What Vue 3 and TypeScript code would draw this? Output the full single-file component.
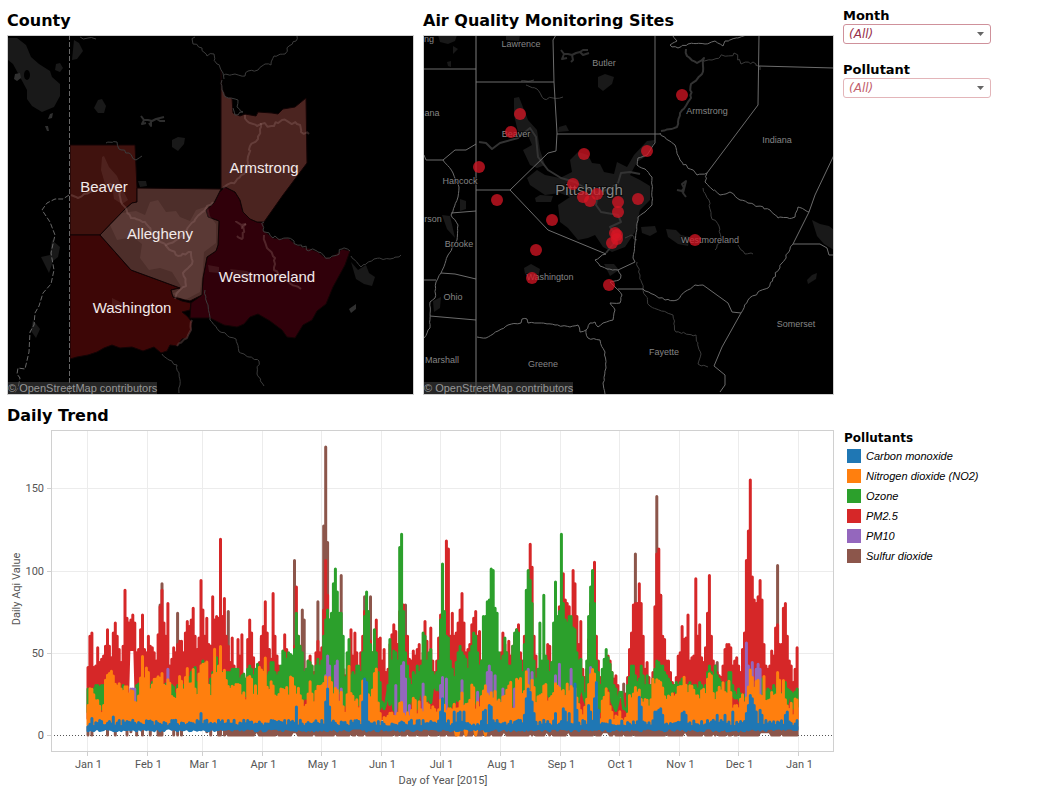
<script setup lang="ts">
import { ref } from 'vue'

type Point = [number, number]
interface Label { name: string; x: number; y: number; size?: number }

const month = ref('(All)')
const pollutant = ref('(All)')
const monthNames = ['Jan', 'Feb', 'Mar', 'Apr', 'May', 'Jun', 'Jul', 'Aug', 'Sep', 'Oct', 'Nov', 'Dec']

const legend = [
  { name: 'Carbon monoxide', color: '#1f77b4' },
  { name: 'Nitrogen dioxide (NO2)', color: '#ff7f0e' },
  { name: 'Ozone', color: '#2ca02c' },
  { name: 'PM2.5', color: '#d62728' },
  { name: 'PM10', color: '#9467bd' },
  { name: 'Sulfur dioxide', color: '#8c564b' },
]

function random(seed: number): () => number {
  let s = seed
  return () => {
    s = (s * 16807) % 2147483647
    return s / 2147483647
  }
}

/* Adds small bends between the given points, as a river has. */
function meander(flat: string, amount: number): string {
  const points = flat.trim().split(' ').map((p) => p.split(',').map(Number) as Point)
  const rnd = random(97 + points.length * 31 + Math.round(points[0][0]))
  let d = `M${points[0][0]} ${points[0][1]}`
  for (let i = 1; i < points.length; i++) {
    const [ax, ay] = points[i - 1]
    const [bx, by] = points[i]
    const steps = Math.max(1, Math.round(Math.hypot(bx - ax, by - ay) / 3))
    for (let k = 1; k <= steps; k++) {
      const t = k / steps
      const j = k === steps ? 0 : amount
      const x = ax + (bx - ax) * t + (rnd() - 0.5) * j * 2
      const y = ay + (by - ay) * t + (rnd() - 0.5) * j * 2
      d += `L${x.toFixed(1)} ${y.toFixed(1)}`
    }
  }
  return d
}

/* County map */
const counties = [
  { name: 'Beaver', fill: '#40120e', d: 'M70 145 135 145 137 188 137 202 132 203 125 209 100 235 70 235Z' },
  { name: 'Washington', fill: '#3d0606', d: 'M70 235 100 235 131 270 180 288 171 290 173 297 182 301 191 303 190 310 182 312 187 316 192 322 191 330 187 338 182 339 177 346 170 345 167 351 161 353 154 347 143 351 132 347 120 348 112 345 104 348 97 352 88 355 77 357 70 359Z' },
  { name: 'Westmoreland', fill: '#30000a', d: 'M225 187 235 192 240 200 243 212 250 219 257 222 264 223 263 230 268 234 273 238 281 239 288 238 295 244 302 247 310 249 318 252 324 257 330 258 338 253 342 249 350 251 345 265 333 287 326 304 317 311 312 320 303 325 295 338 287 337 282 330 270 321 258 314 250 317 244 324 237 327 224 325 210 318 190 318 191 303 202 295 203 278 207 257 216 251 218 245 219 221 208 217 206 210 214 203 219 193Z' },
  { name: 'Armstrong', fill: '#4b2420', d: 'M221 70 222 88 226 97 232 98 233 113 240 116 245 114 256 116 258 112 272 113 278 114 283 109 295 107 306 98 307 163 283 195 264 222 257 222 250 219 243 212 240 200 235 192 225 187 221 189Z' },
  { name: 'Allegheny', fill: '#4d2e2a', d: 'M137 188 221 189 219 193 214 203 206 210 208 217 219 221 218 245 216 251 207 257 203 278 202 295 190 301 173 297 171 290 180 288 131 270 100 235 125 209 132 203 137 202Z' },
]
const countyLabels: Label[] = [
  { name: 'Beaver', x: 104, y: 192 },
  { name: 'Allegheny', x: 160, y: 239 },
  { name: 'Armstrong', x: 264, y: 173 },
  { name: 'Westmoreland', x: 267, y: 282 },
  { name: 'Washington', x: 132, y: 313 },
]
const countyPatches = [
  'M8 38 17 38 26 45 31 57 39 64 50 71 52 77 60 84 60 96 54 107 42 112 32 106 27 99 27 90 20 77 13 64 8 60Z',
  'M74 40 79 43 83 51 77 59 72 60Z',
  'M56 64 60 63 63 68 60 72 55 70Z',
  'M98 100 102 99 106 106 104 113 98 113 94 108Z',
  'M172 140 178 137 185 138 184 144 178 151 172 147Z',
  'M138 181 146 181 147 186 140 187Z',
  'M41 257 50 255 52 240 60 247 58 257 53 261 49 273Z',
  'M33 320 40 329 36 338 31 331Z',
  'M351 262 358 270 366 265 369 273 375 277 372 286 364 284 356 279Z',
]
const urbanPatches = [
  'M102 157 104 156 109 167 117 176 122 188 128 200 122 204 114 199 112 185 105 184 101 170Z',
  'M110 225 122 213 136 211 145 215 150 202 158 200 166 212 176 211 180 217 190 221 196 210 208 206 210 216 216 224 216 243 204 252 203 270 200 292 185 300 172 294 182 288 172 272 160 268 149 270 140 258 142 244 133 237 117 240Z',
  'M208 265 219 267 219 273 209 272Z',
  'M230 269 247 271 254 276 248 281 235 277Z',
  'M112 298 120 302 124 307 112 307Z',
]
const countyRivers = [
  meander('80,37 88,38 96,39', 2),
  meander('195,37 193,44 202,48 207,56 214,54 217,64 223,73 224,79', 2),
  meander('224,75 235,74 245,76 248,71 258,70 265,64 271,65 274,56 285,54 289,46 296,41 297,36', 1),
  meander('222,80 222,90 226,97 238,100 237,107 243,112 235,115 233,108', 1),
  meander('106,143 117,142 119,149 129,153 136,160 142,156', 1),
  meander('264,222 263,230 273,238 288,238 302,247 318,252 330,258 342,249 350,251', 2),
  meander('205,290 207,303 210,320 219,331 236,339 239,352 249,357 259,361 257,374 264,386', 1),
  meander('162,354 169,360 177,365 180,385 179,393', 1),
  meander('351,256 361,267 374,259 390,259 401,255', 1),
]
const urbanRivers = [
  meander('71,195 78,198 84,194 98,189 110,184 118,188 122,204 131,218 145,222 154,236 166,245 178,239 190,225 206,208 213,202', 1),
  meander('165,245 178,256 191,252 192,264 183,273 186,286 178,292 175,299', 1),
  meander('245,115 247,121 257,126 261,124 258,139 250,146 248,163 244,174 236,181 223,188', 1),
  meander('260,124 274,126 282,120 297,124 301,132 309,134', 2),
  meander('264,235 267,248 275,258 274,270 286,280 301,289', 1),
  meander('236,221 242,228 246,224', 2),
  meander('246,224 242,239 237,236', 2),
  meander('192,320 191,330 187,338 177,346', 1),
]

/* Site map */
const borders = [
  'M424 69H476', 'M476 82H554', 'M556 35 553 40 554 82 557 133 556 151 548 153 510 190H476',
  'M510 190 548 230 606 254', 'M557 134H660', 'M655 35V143', 'M759 35 758 105 707 173',
  'M759 66 834 68', 'M834 155 815 195 809 212 793 244H820L827 248 829 255H834',
  'M424 155 426 160H443L455 150 466 150 476 144', 'M451 213 476 211', 'M441 273 455 274 476 279',
  'M424 280H436', 'M430 316 476 320', 'M618 289H643', 'M618 270 635 262',
  'M741 313 722 347 714 366 725 375 725 385 720 392',
  'M703 285 728 303 732 312 741 313',
  meander('655,143 647,155 638,158 637,165 645,169 652,177 652,205 645,212 638,217 635,242 633,258 635,262', 0.5),
  meander('606,254 600,257 595,260 600,266 607,269 618,270 621,275 619,280 610,282 616,288 622,295 620,303 610,303 615,310 613,320 603,323 598,327 595,322 590,323 586,330 580,332 578,325 570,327 555,325 538,323 528,323 527,319 522,319 521,323 508,325 498,331 486,338 477,337', 0.6),
  meander('643,289 665,300 677,300 686,291 695,285 703,285', 0.8),
  meander('793,244 782,263 773,278 768,288 758,292 748,300 741,313', 1),
  meander('660,133 675,145 680,160 697,175 707,173 705,182 720,195 730,192 740,200 748,203 770,210 778,218 795,217 798,207 809,212', 1.2),
  meander('673,36 677,41 670,45 678,48 688,44 705,44 715,41 723,46 725,41 747,35', 1),
  meander('443,160 453,173 459,187 458,197 451,215 458,225 457,240 448,255 441,273 436,282 435,298 430,302 430,328 424,338', 0.6),
  meander('586,330 588,338 600,340 605,352 606,368 603,383 605,394', 0.8),
]
const sitePatches = [
  'M438 35 457 35 455 41 448 44 440 42Z', 'M453 46 458 49 453 54Z', 'M447 62 451 61 451 67 448 66Z',
  'M506 35 520 35 519 41 506 40Z', 'M598 77 605 74 614 77 612 84 603 91 598 87Z',
  'M559 127 566 125 569 131 558 132Z', 'M514 98 519 97 528 120 537 130 540 150 545 165 537 168 530 165 523 150 532 145 527 133 518 132 514 115Z',
  'M570 160 578 152 588 155 592 163 600 164 604 172 614 174 617 162 627 167 634 155 647 141 655 140 648 155 637 162 630 175 640 180 650 186 650 200 640 210 635 232 625 247 612 252 603 247 595 235 588 238 578 240 568 228 560 222 558 205 570 197 560 193 545 195 530 185 527 178 537 170 545 175 560 178 572 172Z',
  'M535 198 540 195 553 196 551 202 536 202Z', 'M524 268 531 264 540 269 538 278 525 274Z',
  'M442 215 450 216 453 229 455 238 447 229Z', 'M433 301 441 297 440 308 434 312Z',
  'M641 227 655 226 657 232 650 236 642 233Z', 'M666 229 676 230 681 235 690 237 688 246 678 244 668 237Z',
  'M812 220 820 224 829 226 834 230 834 250 824 244 817 236Z', 'M812 275 817 273 816 279 808 284 807 280Z',
  'M460 199 466 201 466 209 460 211Z', 'M604 264 614 264 619 270 610 276Z',
]
const siteRivers = [
  'M479 142 486 143 492 149 500 143 518 138 530 128 536 137 538 157 548 170 561 178 575 182 585 188 598 193 611 188 618 183 621 173 630 172 640 174',
  'M598 193 596 205 601 212 618 215 621 222 610 227 618 238 606 253',
  meander('686,49 687,56 697,63 704,58 702,74 691,84 691,98 680,113 677,127 661,131', 0.8),
]
const streams = [
  meander('703,60 712,60 720,57 734,53 741,64 753,62 760,70', 2),
  meander('526,85 537,89 544,99 553,98 563,97', 1),
  meander('521,81 534,80', 1),
  meander('703,188 709,200 711,216 719,226 721,240 715,250', 1),
  meander('738,245 745,254 753,254', 1),
  meander('637,240 631,235 625,238', 1),
  meander('637,262 640,275 643,290 650,306 673,315 676,332 696,335 701,354 698,364 708,367', 1.2),
]
const lakes = [
  'M561 50 564 54 568 54 572 55 576 53 580 52 583 50 588 50M564 54 562 59 567 58M572 55 573 60 571 62M580 52 583 55 589 53',
  'M681 192 684 188 682 184 686 181 683 193 686 197M677 190 682 191',
]
const countyLakes = [
  'M141 116 144 120 148 120 152 121 156 119 160 118 164 117M144 120 142 124 146 123M151 121 151 126 149 123M157 119 160 121 165 121',
]
const placeLabels: Label[] = [
  { name: 'ng', x: 429, y: 42 },
  { name: 'Lawrence', x: 521, y: 47 },
  { name: 'Butler', x: 604, y: 66 },
  { name: 'ana', x: 432, y: 116 },
  { name: 'Armstrong', x: 707, y: 114 },
  { name: 'Beaver', x: 516, y: 137 },
  { name: 'Indiana', x: 777, y: 143 },
  { name: 'Hancock', x: 460, y: 184 },
  { name: 'Pittsburgh', x: 589, y: 195, size: 15 },
  { name: 'rson', x: 433, y: 222 },
  { name: 'Brooke', x: 459, y: 247 },
  { name: 'Westmoreland', x: 710, y: 243 },
  { name: 'Washington', x: 550, y: 280 },
  { name: 'Ohio', x: 453, y: 300 },
  { name: 'Somerset', x: 796, y: 327 },
  { name: 'Fayette', x: 664, y: 355 },
  { name: 'Marshall', x: 442, y: 363 },
  { name: 'Greene', x: 543, y: 367 },
]
const sites: Point[] = [
  [520, 114], [511, 132], [479, 167], [584, 154], [573, 184], [497, 200], [682, 95], [647, 151],
  [638, 199], [618, 202], [618, 212], [597, 194], [590, 201], [583, 197], [552, 220], [536, 250],
  [532, 278], [609, 285], [615, 233], [617, 235], [617, 239], [612, 243], [695, 240],
]

/* Daily trend: highest reading of each day */
const X0 = 88
const DAY = 1.948
const yOf = (v: number) => 735 - v * 1.645
const nums = (s: string) => s.trim().split(/[\s,]+/).map(Number)

const pm25 = nums(`
41,60,62,41,42,53,44,46,48,54,64,54,47,62,68,60,52,44,54,88,71,68,70,73,68,50,52,64,73,52,50
60,54,53,50,45,61,78,88,68,60,80,42,46,53,50,55,57,57,50,62,69,66,70,77,60,52,59,94
76,60,71,55,54,84,70,72,71,119,72,83,60,54,44,59,42,38,58,48,61,36,28,58,70,62,47,30,38,44,60
66,81,62,52,46,86,60,48,42,38,40,61,52,45,48,40,54,90,60,54,40,38,35,45,48,42,38,50,57,50
53,76,106,85,70,60,55,50,60,50,45,40,36,40,48,64,48,62,50,40,50,60,75,60,50,57,50,55,70,58,59
45,52,38,40,55,61,67,63,55,75,80,79,60,60,46,45,51,48,52,55,45,50,69,57,45,65,45,38,45,59
73,60,60,118,113,60,74,60,62,68,76,86,68,50,52,55,67,71,75,60,63,45,45,50,45,40,45,45,40,38,45
50,62,55,50,57,48,54,60,64,67,50,45,60,50,80,116,102,60,48,38,40,35,45,40,55,54,40,45,50,60,78
70,98,82,80,78,70,100,92,72,55,69,40,35,40,58,80,92,105,60,45,35,30,38,45,48,45,38,34,36,30
22,20,18,25,35,52,62,79,80,80,92,80,60,40,44,35,30,38,78,110,113,85,60,58,45,45,38,32,30,35,48
50,66,58,59,73,45,47,48,95,60,67,47,44,53,74,97,60,45,42,38,36,35,42,52,55,55,53,42,45,47
42,38,52,62,106,124,155,96,82,80,84,94,82,55,42,40,42,51,48,65,67,55,55,77,80,60,45,42,32,40,53,53`)
const ozone = nums(`
28,20,22,28,30,30,29,30,30,24,22,25,22,24,30,28,25,24,30,28,25,24,22,22,25,30,31,28,30,25,28
28,30,32,25,28,30,28,26,30,31,28,30,30,29,25,30,25,28,30,32,30,35,38,40,41,32,30,38
45,38,32,28,34,38,35,47,40,45,38,36,38,38,38,40,40,40,40,34,36,37,34,40,42,40,36,40,43,38,36
38,42,36,38,44,44,38,36,38,42,51,50,46,50,49,48,52,74,60,54,50,38,40,45,44,42,36,42,46,42
45,60,70,76,70,74,92,101,87,74,74,60,35,50,58,36,38,36,42,42,38,50,72,87,75,55,50,64,50,38,32
20,16,20,30,58,45,51,50,45,114,122,75,50,42,34,30,38,36,42,38,42,62,60,45,50,52,38,36,38,45
70,104,75,60,59,45,40,35,44,50,54,50,48,46,40,50,54,62,60,50,42,45,72,72,81,82,101,100,77,74,50
45,48,59,50,42,42,54,62,64,62,45,38,55,88,100,94,80,45,34,40,68,45,85,48,45,38,44,68,93,72,75
122,80,70,68,72,72,65,64,50,45,46,35,25,45,72,90,100,80,45,38,30,40,46,52,47,43,38,30,28,20
26,26,16,16,30,35,42,42,36,32,34,42,36,30,36,30,30,34,40,45,44,42,42,38,36,34,32,30,30,32,30
32,34,32,30,30,32,28,30,30,28,32,30,28,30,38,42,38,36,42,36,34,32,28,26,32,38,38,30,26,24
28,25,24,24,26,28,30,30,28,28,30,32,34,28,26,28,27,26,30,28,35,28,25,30,32,28,27,26,25,26,28,24`)
const no2 = nums(`
18,33,28,26,22,24,20,18,18,36,38,40,39,40,35,30,34,30,28,32,30,27,28,28,24,24,28,38,48,35,42
40,32,33,34,36,38,35,40,32,30,34,33,28,25,26,30,40,35,28,38,42,34,34,40,32,28,40,43
44,48,48,32,28,38,53,38,46,55,42,42,35,33,30,30,32,35,34,32,28,30,24,39,38,34,26,30,26,46,40
40,48,32,28,34,34,28,26,26,28,30,31,30,26,36,36,32,28,30,26,24,20,20,26,33,28,22,28,34,34
34,34,36,30,37,35,28,32,30,24,26,20,18,25,44,28,26,24,22,20,25,36,35,30,25,26,30,42,42,24,16
12,14,13,16,15,17,14,16,16,20,21,16,15,16,15,18,25,22,16,25,20,18,26,23,20,17,18,18,14,18
26,24,20,17,18,16,16,20,19,20,22,28,20,22,20,24,32,30,20,22,20,28,29,30,29,26,28,26,31,22,22
22,26,28,28,34,34,20,18,36,36,38,26,30,40,34,30,35,30,24,24,26,28,30,31,25,25,28,26,32,30,33
28,30,28,31,28,32,30,30,24,20,18,14,18,25,32,40,40,38,26,14,14,22,26,29,26,22,16,10,12,15
16,14,10,12,16,26,24,28,32,30,28,26,24,24,24,22,25,34,35,34,34,34,33,25,22,26,24,28,26,28,32
30,32,36,34,26,30,32,28,26,28,25,30,32,28,35,40,40,26,24,28,32,31,33,29,26,33,28,20,18,20
18,22,26,20,24,34,42,36,32,36,38,28,26,36,25,24,22,28,24,28,42,34,26,34,24,20,18,20,16,26,24,18`)

const coPeaks: Record<number, number> = {
  2: 10, 13: 11, 58: 13, 107: 17, 122: 20, 123: 28, 124: 17, 141: 20, 142: 34, 143: 32, 181: 14, 182: 22, 183: 13,
  188: 14, 190: 13, 191: 14, 193: 14, 203: 14, 204: 15, 206: 18, 207: 17, 224: 12, 225: 22, 226: 28, 227: 26, 228: 20,
  229: 13, 240: 13, 244: 16, 245: 14, 247: 13, 250: 31, 251: 15, 257: 18, 258: 14, 260: 22, 261: 32, 262: 15, 283: 23,
  284: 17, 291: 14, 292: 14, 293: 15, 294: 16, 295: 12, 305: 13, 306: 14, 307: 12, 323: 12, 327: 12, 331: 14, 338: 13,
  339: 18, 340: 24, 341: 22, 342: 18, 343: 14, 345: 15, 346: 12, 358: 12, 359: 14,
}
const so2Peaks: Record<number, number> = {
  20: 49, 37: 79, 38: 92, 46: 74, 72: 75, 89: 59, 93: 52, 106: 106, 110: 76, 111: 70, 118: 81, 121: 127, 122: 175, 123: 117,
  130: 97, 142: 84, 145: 84, 163: 79, 275: 31, 281: 110, 292: 145, 294: 85, 323: 44, 354: 103,
}
const pm10Peaks: Record<number, number> = {
  22: 28, 23: 28, 24: 28, 28: 18, 41: 40, 46: 18, 51: 16, 57: 24, 58: 25, 59: 22, 118: 14, 122: 36, 123: 48, 124: 42,
  127: 42, 128: 45, 130: 28, 158: 30, 161: 42, 162: 44, 163: 34, 165: 18, 172: 31, 181: 30, 182: 35, 184: 34, 192: 33,
  200: 26, 205: 38, 206: 42, 207: 38, 209: 36, 213: 28, 219: 28, 226: 40, 228: 38, 233: 22, 240: 36, 242: 43, 248: 40,
  258: 41, 259: 36, 338: 56, 339: 42, 341: 44, 343: 40, 344: 43, 345: 40, 349: 20,
}

function spikes(high: (d: number) => number | null, low: (d: number) => number): string {
  let path = ''
  let open = false
  for (let d = 0; d < 365; d++) {
    const h = high(d)
    if (h === null) { open = false; continue }
    const x = (X0 + d * DAY).toFixed(1)
    const lo = yOf(low(d)).toFixed(1)
    path += `${open ? 'L' : 'M'}${x} ${lo}V${yOf(h).toFixed(1)}V${lo}`
    open = true
  }
  return path
}
const rs = random(11)
const rc = random(23)
const rg = random(37)
const ro = random(53)
const series = [
  { color: '#8c564b', d: spikes((d) => so2Peaks[d] ?? (d < 70 && rs() > 0.2 ? null : 5), () => (rs() > 0.2 ? 0 : 2)) },
  { color: '#d62728', d: spikes((d) => pm25[d], (d) => (d > 20 && d < 25 ? 52 : 10)) },
  { color: '#2ca02c', d: spikes((d) => ozone[d], (d) => Math.min(ozone[d], 14 + rg() * 16)) },
  { color: '#9467bd', d: spikes((d) => pm10Peaks[d] ?? null, () => 8) },
  { color: '#ff7f0e', d: spikes((d) => no2[d] - ro() * 5, (d) => (d > 188 && d < 205 && ro() > 0.5 ? 0 : 6)) },
  { color: '#1f77b4', d: spikes((d) => coPeaks[d] ?? 5 + rc() * 4, () => 2.5 + rc() * 2) },
]
const monthTicks = [0, 31, 59, 90, 120, 151, 181, 212, 243, 273, 304, 334, 365].map((d, i) => ({
  x: Math.round(X0 + d * DAY) - 0.5,
  name: `${monthNames[i % 12]} 1`,
}))
const valueTicks = [0, 50, 100, 150].map((v) => ({ v, y: Math.round(yOf(v)) + 0.5 }))
</script>

<template>
  <main class="dashboard">
    <section class="panel">
      <h2>County</h2>
      <div class="map">
        <svg viewBox="7 35 407 360" role="img" aria-label="County map">
          <rect x="7" y="35" width="407" height="360" fill="#000" />
          <path v-for="p in countyPatches" :key="p" :d="p" class="patch" />
          <ellipse cx="27" cy="75" rx="3" ry="5" fill="#000" />
          <path class="patch light" d="M15 74 20 73 21 78 17 81 14 79Z M50 114 53 113 52 118 48 119Z M45 126 48 126 49 131 47 131Z M349 309 356 304 356 309 351 313Z" />
          <path v-for="c in counties" :key="c.name" :d="c.d" :fill="c.fill" stroke="#120304" />
          <path v-for="p in urbanPatches" :key="p" :d="p" class="urban" />
          <path v-for="p in countyRivers" :key="p" :d="p" class="river" />
          <path v-for="p in countyLakes" :key="p" :d="p" class="river lake" />
          <path v-for="p in urbanRivers" :key="p" :d="p" class="urban-river" />
          <path class="state" d="M69.500 35V394" />
          <path class="state" d="M69 195 63 199 55 199 47 203 42 210 50 222 55 235 51 253 54 270 51 284 43 293 39 306 35 313 34 325 30 332 29 352 25 369 18 368 17 374 20 378 18 388 14 394" />
          <text v-for="l in countyLabels" :key="l.name" :x="l.x" :y="l.y" class="county-label">{{ l.name }}</text>
        </svg>
        <small>© OpenStreetMap contributors</small>
      </div>
    </section>

    <section class="panel">
      <h2>Air Quality Monitoring Sites</h2>
      <div class="map">
        <svg viewBox="423 35 411 360" role="img" aria-label="Air quality monitoring sites map">
          <rect x="423" y="35" width="411" height="360" fill="#000" />
          <path v-for="p in sitePatches" :key="p" :d="p" class="patch" />
          <path v-for="p in siteRivers" :key="p" :d="p" class="river wide" />
          <path v-for="p in streams" :key="p" :d="p" class="river" />
          <path v-for="p in lakes" :key="p" :d="p" class="river lake" />
          <path v-for="p in borders" :key="p" :d="p" class="border" />
          <path d="M476 35V394" class="border strong" />
          <text
            v-for="l in placeLabels"
            :key="l.name"
            :x="l.x"
            :y="l.y"
            :font-size="l.size ?? 9"
            class="place-label"
          >{{ l.name }}</text>
          <circle v-for="(s, i) in sites" :key="i" :cx="s[0]" :cy="s[1]" r="6" class="site" />
        </svg>
        <small>© OpenStreetMap contributors</small>
      </div>
    </section>

    <aside class="filters">
      <div class="filter">
        <label for="month">Month</label>
        <div class="select strong">
          <select id="month" v-model="month">
            <option>(All)</option>
            <option v-for="m in monthNames" :key="m">{{ m }}</option>
          </select>
          <svg viewBox="0 0 7 4" width="7" height="4" aria-hidden="true"><path d="M0 0H7L3.500 4Z" /></svg>
        </div>
      </div>
      <div class="filter">
        <label for="pollutant">Pollutant</label>
        <div class="select">
          <select id="pollutant" v-model="pollutant">
            <option>(All)</option>
            <option v-for="l in legend" :key="l.name">{{ l.name }}</option>
          </select>
          <svg viewBox="0 0 7 4" width="7" height="4" aria-hidden="true"><path d="M0 0H7L3.500 4Z" /></svg>
        </div>
      </div>
    </aside>

    <section class="panel trend">
      <h2>Daily Trend</h2>
      <svg viewBox="7 430 827 363" role="img" aria-label="Daily trend chart">
        <g class="grid">
          <path v-for="t in monthTicks" :key="t.x" :d="`M${t.x} 431V751`" />
          <path v-for="t in valueTicks.slice(1)" :key="t.v" :d="`M52 ${t.y}H833`" />
        </g>
        <path class="zero" d="M54 735.500H832" />
        <path v-for="s in series" :key="s.color" :d="s.d" :stroke="s.color" class="line" />
        <g class="axis">
          <rect x="51.5" y="430.5" width="782" height="321" />
          <path v-for="t in monthTicks" :key="t.x" :d="`M${t.x} 752V756`" />
          <path v-for="t in valueTicks" :key="t.v" :d="`M47 ${t.y}H51`" />
        </g>
        <text v-for="t in monthTicks" :key="t.x" :x="t.x + 1" y="768" class="tick mid">{{ t.name }}</text>
        <text v-for="t in valueTicks" :key="t.v" x="44" :y="t.y + 3" class="tick end">{{ t.v }}</text>
        <text x="443" y="784" class="tick mid">Day of Year [2015]</text>
        <text transform="translate(20 589) rotate(-90)" class="tick mid">Daily Aqi Value</text>
      </svg>
    </section>

    <aside class="legend">
      <h3>Pollutants</h3>
      <ul>
        <li v-for="l in legend" :key="l.name">
          <span class="swatch" :style="{ background: l.color }"></span>{{ l.name }}
        </li>
      </ul>
    </aside>
  </main>
</template>

<style>
body {
  margin: 0;
  background: #fff;
}
</style>

<style scoped>
.dashboard {
  display: grid;
  grid-template-columns: 407fr 411fr 194px;
  column-gap: 9px;
  padding-left: 7px;
  color: #000;
  font-family: "Liberation Sans", Arial, sans-serif;
}
h2 {
  margin: 0;
  padding: 11px 0 4px;
  font: bold 16px/20px "DejaVu Sans", Verdana, sans-serif;
}
.panel svg {
  display: block;
  width: 100%;
  height: auto;
}
.map {
  display: grid;
}
.map > * {
  grid-area: 1 / 1;
}
.map svg {
  outline: 1px solid #d0d0d0;
  outline-offset: -1px;
}
.map small {
  place-self: end start;
  margin: 0 0 1px 1px;
  background: rgba(70, 70, 70, 0.55);
  color: #969696;
  font-size: 11px;
  line-height: 12px;
}
.patch {
  fill: #191919;
}
.patch.light {
  fill: #303030;
}
.urban {
  fill: rgba(150, 110, 105, 0.18);
}
.river,
.urban-river,
.border,
.state {
  fill: none;
  stroke: #3c3c3c;
  stroke-linejoin: round;
}
.river.wide {
  stroke: #333;
  stroke-width: 2;
}
.river.lake {
  stroke: #2e2e2e;
  stroke-width: 2;
}
.urban-river {
  stroke: rgba(160, 120, 115, 0.3);
  stroke-width: 2;
}
.state {
  stroke: #686868;
  stroke-dasharray: 5 2;
}
.border {
  stroke: #6c6c6c;
}
.border.strong {
  stroke: #7c7c7c;
}
.county-label {
  fill: #f2eaea;
  font-size: 15px;
  text-anchor: middle;
}
.place-label {
  fill: #858585;
  stroke: #000;
  stroke-width: 2;
  stroke-opacity: 0.5;
  paint-order: stroke;
  text-anchor: middle;
}
.site {
  fill: #d81524;
  fill-opacity: 0.75;
}
.filters {
  display: flex;
  flex-direction: column;
  gap: 18px;
  padding-top: 8px;
}
.filter {
  display: flex;
  flex-direction: column;
  width: 148px;
}
.filter label {
  font: bold 13px/16px "DejaVu Sans", Verdana, sans-serif;
}
.select {
  display: grid;
  height: 20px;
  color: #c2606c;
}
.select.strong {
  color: #98304a;
}
.select > * {
  grid-area: 1 / 1;
}
.select select {
  appearance: none;
  box-sizing: border-box;
  width: 100%;
  margin: 0;
  padding: 0 20px 0 5px;
  border: 1px solid #e3b5b9;
  border-radius: 3px;
  background: #fff;
  color: inherit;
  font: italic 12px/18px "DejaVu Sans", Verdana, sans-serif;
}
.select.strong select {
  border-color: #cf919b;
}
.select svg {
  place-self: center end;
  margin-right: 7px;
  fill: #666;
  pointer-events: none;
}
.trend {
  grid-column: 1 / 3;
}
.grid path {
  stroke: #ececec;
}
.zero {
  stroke: #555;
  stroke-dasharray: 1 2;
}
.line {
  fill: none;
  stroke-width: 3;
  stroke-linecap: round;
  stroke-linejoin: round;
}
.axis rect,
.axis path {
  fill: none;
  stroke: #d0d0d0;
}
.tick {
  fill: #555;
  font-family: Roboto, Arial, sans-serif;
  font-size: 11px;
}
.mid {
  text-anchor: middle;
}
.end {
  text-anchor: end;
}
.legend {
  padding-top: 35px;
}
.legend h3 {
  margin: 0 0 0 1px;
  font: bold 12px/16px "DejaVu Sans", Verdana, sans-serif;
}
.legend ul {
  margin: 0;
  padding: 0 0 0 4px;
  list-style: none;
}
.legend li {
  display: flex;
  align-items: center;
  gap: 5px;
  height: 20px;
  font-size: 11px;
  font-style: italic;
}
.swatch {
  width: 14px;
  height: 14px;
}
</style>
